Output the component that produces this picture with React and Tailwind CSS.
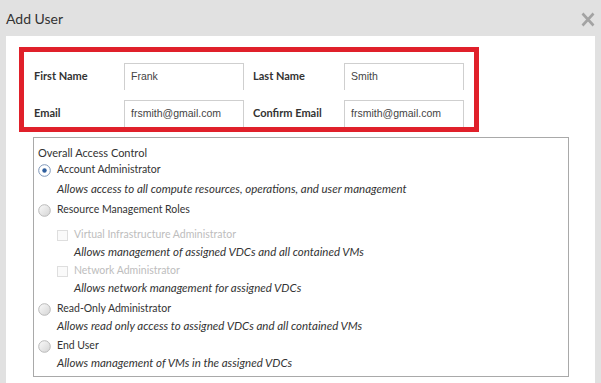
import React from 'react';

const font = { fontFamily: 'Lato, "Open Sans", Arial, sans-serif' };

function Radio({ checked }) {
  return (
    <svg width="13" height="13" viewBox="0 0 13 13" className="shrink-0">
      <defs>
        <linearGradient id="rg" x1="0" y1="0" x2="1" y2="1">
          <stop offset="0" stopColor="#fbfbfb" />
          <stop offset="1" stopColor="#d4d4d4" />
        </linearGradient>
      </defs>
      {checked ? (
        <>
          <circle cx="6.5" cy="6.5" r="5.8" fill="#fff" stroke="#7d96b8" strokeWidth="1" />
          <circle cx="6.5" cy="6.5" r="2.2" fill="#2f5f9e" />
        </>
      ) : (
        <circle cx="6.5" cy="6.5" r="5.8" fill="url(#rg)" stroke="#b9b9b9" strokeWidth="1" />
      )}
    </svg>
  );
}

function Field({ label, value, labelWidth }) {
  return (
    <>
      <div className={`${labelWidth} text-[11px] font-bold text-[#333]`}>{label}</div>
      <div
        className="flex h-[27px] w-[120px] items-center border border-b-0 border-[#cfcfcf] pl-[6px] text-[10.5px] text-[#444]"
        style={{ fontFamily: '"Liberation Sans", Arial, sans-serif' }}
      >
        {value}
      </div>
    </>
  );
}

function RadioRow({ checked, label, mt }) {
  return (
    <div className={`${mt} flex h-4 items-center gap-[6px] text-[10.5px] text-[#333]`}>
      <Radio checked={checked} />
      <span>{label}</span>
    </div>
  );
}

function CheckRow({ label, mt }) {
  return (
    <div className={`${mt} flex h-4 items-center gap-[6px] pl-[19px] text-[10.5px] text-[#bdbdbd]`}>
      <span className="h-[11px] w-[11px] shrink-0 border border-[#dedede] bg-[#fafafa]" />
      <span>{label}</span>
    </div>
  );
}

function Desc({ children, indent, mt }) {
  return <div className={`${mt} ${indent} h-4 text-[11.5px] leading-4 italic text-[#333]`}>{children}</div>;
}

export default function App() {
  return (
    <div className="flex h-[383px] w-[601px] flex-col overflow-hidden bg-[#e1e1e1]" style={font}>
      <div className="flex h-[36px] shrink-0 items-center justify-between pl-[6px] pr-[6px]">
        <span className="text-[14px] text-[#333]">Add User</span>
        <svg width="14" height="15" viewBox="0 0 14 15" className="mt-[2px]">
          <path d="M1.5 1.5 L12.5 13.5 M12.5 1.5 L1.5 13.5" stroke="#a3a3a3" strokeWidth="2.6" />
        </svg>
      </div>

      <div className="mx-[6px] flex-1 bg-white pt-[11px]">
        <div className="ml-[13px] h-[85px] w-[460px] border-[5px] border-[#e0202a] pl-[10px] pt-[11px]">
          <div className="flex items-center">
            <Field label="First Name" value="Frank" labelWidth="w-[90px]" />
            <div className="w-[9px]" />
            <Field label="Last Name" value="Smith" labelWidth="w-[91px]" />
          </div>
          <div className="mt-[10px] flex items-center">
            <Field label="Email" value="frsmith@gmail.com" labelWidth="w-[90px]" />
            <div className="w-[9px]" />
            <Field label="Confirm Email" value="frsmith@gmail.com" labelWidth="w-[91px]" />
          </div>
        </div>

        <div className="ml-[27px] mt-[5px] h-[240px] w-[536px] border border-[#a9a9a9] pl-[4px] pt-[7px]">
          <div className="h-4 text-[11px] leading-4 text-[#333]">Overall Access Control</div>
          <RadioRow checked label="Account Administrator" mt="mt-[1px]" />
          <Desc mt="mt-[3px]" indent="pl-[19px]">
            Allows access to all compute resources, operations, and user management
          </Desc>
          <RadioRow label="Resource Management Roles" mt="mt-[5px]" />
          <CheckRow label="Virtual Infrastructure Administrator" mt="mt-[9px]" />
          <Desc mt="mt-[1px]" indent="pl-[36px]">
            Allows management of assigned VDCs and all contained VMs
          </Desc>
          <CheckRow label="Network Administrator" mt="mt-[3px]" />
          <Desc mt="mt-[1px]" indent="pl-[36px]">
            Allows network management for assigned VDCs
          </Desc>
          <RadioRow label="Read-Only Administrator" mt="mt-[5px]" />
          <Desc mt="mt-[1px]" indent="pl-[19px]">
            Allows read only access to assigned VDCs and all contained VMs
          </Desc>
          <RadioRow label="End User" mt="mt-[4px]" />
          <Desc mt="mt-[1px]" indent="pl-[19px]">
            Allows management of VMs in the assigned VDCs
          </Desc>
        </div>
      </div>
    </div>
  );
}
